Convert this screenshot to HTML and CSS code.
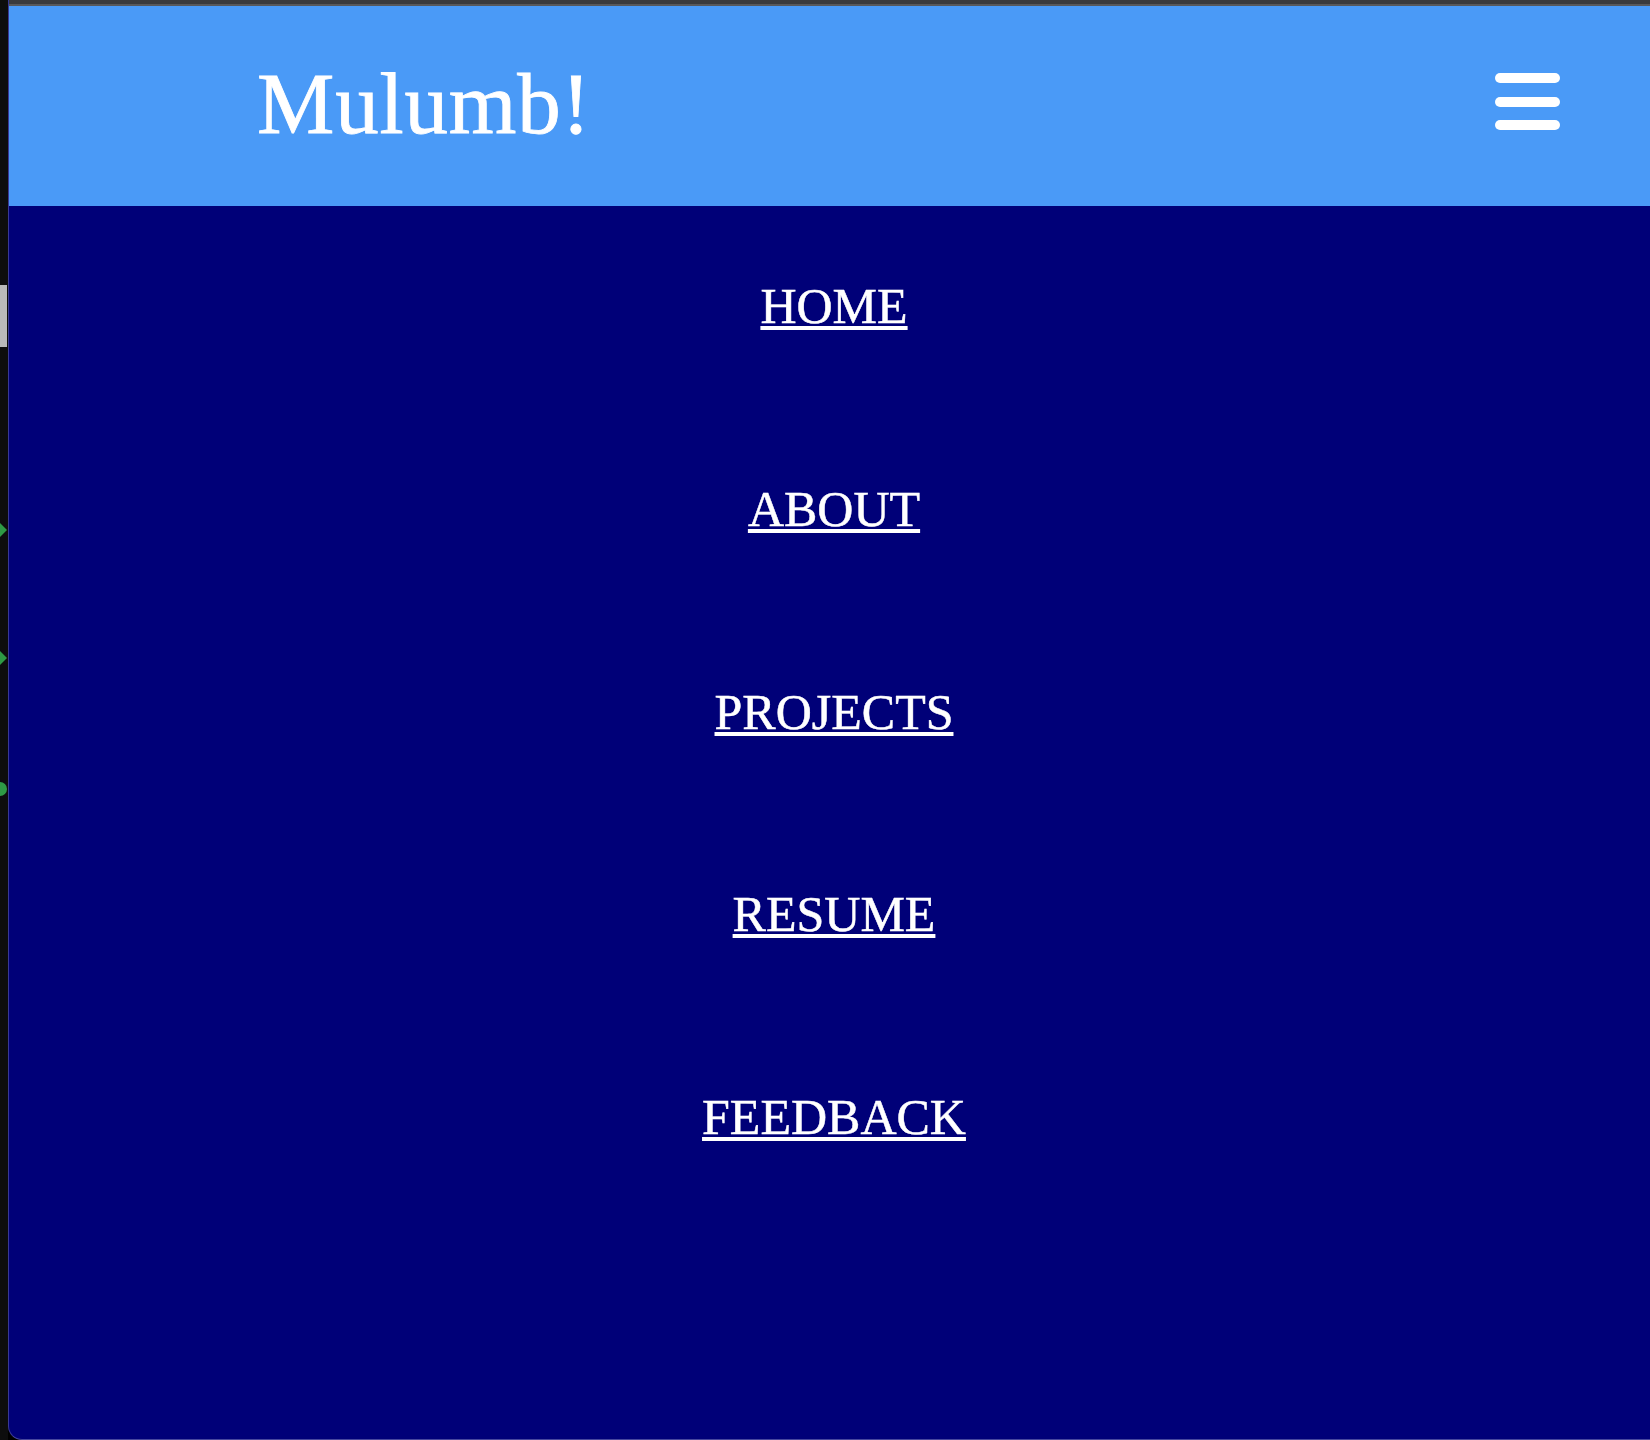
FILE: index.html
```html
<!DOCTYPE html>
<html lang="en">
<head>
<meta charset="utf-8">
<title>Mulumb!</title>
<link rel="stylesheet" href="styles.css">
</head>
<body>
<div class="desk">
  <div class="strip">
    <span class="strip-block"></span>
    <span class="strip-dot dot1"></span>
    <span class="strip-dot dot2"></span>
    <span class="strip-dot dot3"></span>
  </div>
  <div class="window">
    <div class="titlebar"></div>
    <header class="header">
      <div class="logo">Mulumb!</div>
      <button class="burger" aria-label="Menu">
        <span class="bar"></span>
        <span class="bar bar2"></span>
        <span class="bar bar3"></span>
      </button>
    </header>
    <nav class="menu">
      <a href="#" class="menu-link">HOME</a>
      <a href="#" class="menu-link">ABOUT</a>
      <a href="#" class="menu-link">PROJECTS</a>
      <a href="#" class="menu-link">RESUME</a>
      <a href="#" class="menu-link">FEEDBACK</a>
    </nav>
  </div>
</div>
</body>
</html>
```
FILE: styles.css
```css
html, body {
  margin: 0;
  padding: 0;
  background: #000;
  overflow: hidden;
}

.desk {
  display: flex;
  width: 1650px;
  height: 1440px;
  background: #000;
}

.strip {
  width: 8px;
  flex: none;
  background: #0d0d0d;
  display: flex;
  flex-direction: column;
  align-items: flex-start;
}

.strip-block {
  display: block;
  width: 7px;
  height: 62px;
  margin-top: 285px;
  background: #b9b9b9;
}

.strip-dot {
  display: block;
  width: 7px;
  height: 14px;
  background: #2e9a45;
  clip-path: polygon(0 0, 100% 50%, 0 100%);
}

.dot1 { margin-top: 176px; }
.dot2 { margin-top: 114px; }
.dot3 { margin-top: 117px; border-radius: 0 7px 7px 0; clip-path: none; }

.window {
  flex: 1;
  height: 1439px;
  display: flex;
  flex-direction: column;
  border-left: 1px solid rgba(255, 255, 255, 0.22);
  border-bottom: 1px solid rgba(255, 255, 255, 0.28);
  border-bottom-left-radius: 14px;
  overflow: hidden;
  background: #000078;
}

.titlebar {
  height: 4px;
  flex: none;
  background: #3a3a3c;
  border-bottom: 2px solid #58585a;
}

.header {
  height: 200px;
  flex: none;
  background: #4a9af7;
  display: flex;
  justify-content: space-between;
  align-items: flex-start;
  padding: 0 90px 0 248px;
  box-sizing: border-box;
}

.logo {
  margin-top: 54px;
  font-family: "Liberation Serif", "Times New Roman", serif;
  font-size: 87px;
  line-height: 1;
  letter-spacing: 0.8px;
  color: #fff;
  -webkit-text-stroke: 0.8px #fff;
}

.burger {
  margin-top: 67px;
  padding: 0;
  border: 0;
  background: none;
  display: flex;
  flex-direction: column;
}

.bar {
  display: block;
  width: 65px;
  height: 10px;
  border-radius: 5px;
  background: #fff;
}

.bar2 { margin-top: 14px; }
.bar3 { margin-top: 13px; }

.menu {
  flex: 1;
  display: flex;
  flex-direction: column;
  align-items: center;
  gap: 152.75px;
  padding: 75px 0 0 9px;
}

.menu-link {
  display: block;
  height: 50px;
  font-family: "Liberation Serif", "Times New Roman", serif;
  font-size: 50px;
  line-height: 50px;
  color: #fff;
  -webkit-text-stroke: 0.5px #fff;
  text-decoration: underline;
  text-decoration-thickness: 4px;
  text-underline-offset: 3px;
}
```
